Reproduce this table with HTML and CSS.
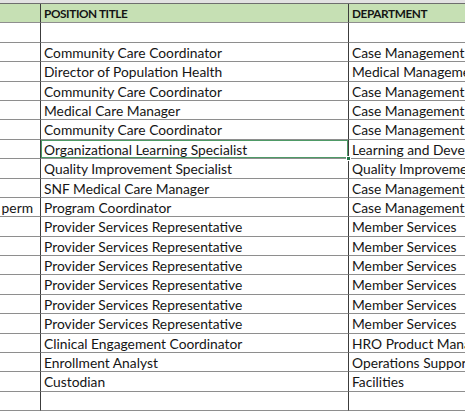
FILE: index.html
```html
<!DOCTYPE html>
<html>
<head>
<meta charset="utf-8">
<link rel="stylesheet" href="styles.css">
</head>
<body>
<div class="topstrip"></div>
<div class="sheet">
  <div class="cell a hdr"></div><div class="cell b hdr">POSITION TITLE</div><div class="cell c hdr">DEPARTMENT</div>
  <div class="cell a"></div><div class="cell b"></div><div class="cell c"></div>
  <div class="cell a"></div><div class="cell b">Community Care Coordinator</div><div class="cell c">Case Management</div>
  <div class="cell a"></div><div class="cell b">Director of Population Health</div><div class="cell c">Medical Management</div>
  <div class="cell a"></div><div class="cell b">Community Care Coordinator</div><div class="cell c">Case Management</div>
  <div class="cell a"></div><div class="cell b">Medical Care Manager</div><div class="cell c">Case Management</div>
  <div class="cell a"></div><div class="cell b">Community Care Coordinator</div><div class="cell c">Case Management</div>
  <div class="cell a"></div><div class="cell b selected">Organizational Learning Specialist</div><div class="cell c">Learning and Development</div>
  <div class="cell a"></div><div class="cell b">Quality Improvement Specialist</div><div class="cell c">Quality Improvement</div>
  <div class="cell a"></div><div class="cell b">SNF Medical Care Manager</div><div class="cell c">Case Management</div>
  <div class="cell a right">perm</div><div class="cell b">Program Coordinator</div><div class="cell c">Case Management</div>
  <div class="cell a"></div><div class="cell b">Provider Services Representative</div><div class="cell c">Member Services</div>
  <div class="cell a"></div><div class="cell b">Provider Services Representative</div><div class="cell c">Member Services</div>
  <div class="cell a"></div><div class="cell b">Provider Services Representative</div><div class="cell c">Member Services</div>
  <div class="cell a"></div><div class="cell b">Provider Services Representative</div><div class="cell c">Member Services</div>
  <div class="cell a"></div><div class="cell b">Provider Services Representative</div><div class="cell c">Member Services</div>
  <div class="cell a"></div><div class="cell b">Provider Services Representative</div><div class="cell c">Member Services</div>
  <div class="cell a"></div><div class="cell b">Clinical Engagement Coordinator</div><div class="cell c">HRO Product Management</div>
  <div class="cell a"></div><div class="cell b">Enrollment Analyst</div><div class="cell c">Operations Support</div>
  <div class="cell a"></div><div class="cell b">Custodian</div><div class="cell c">Facilities</div>
  <div class="cell a"></div><div class="cell b"></div><div class="cell c"></div>
</div>
</body>
</html>
```
FILE: styles.css
```css
html, body {
  margin: 0;
  padding: 0;
  overflow: hidden;
  background: #ffffff;
  width: 465px;
  height: 414px;
}
.topstrip {
  height: 3px;
  background: #e2e2e2;
}
.sheet {
  display: grid;
  grid-template-columns: 41px 308px 220px;
  grid-auto-rows: 19.4px;
  border-top: 1px solid #6e6e6e;
  width: 569px;
  font-family: "Lato", "Liberation Sans", sans-serif;
  font-size: 13.8px;
  color: #151515;
}
.cell {
  box-sizing: border-box;
  border-bottom: 1px solid #8e8e8e;
  white-space: nowrap;
  overflow: hidden;
  line-height: 20px;
  padding-left: 3px;
  position: relative;
}
.a {
  border-right: 1px solid #3c3c3c;
}
.b {
  border-right: 1px solid #3c3c3c;
}
.hdr {
  background: #c6e0b4;
  font-weight: bold;
  font-size: 11.8px;
  letter-spacing: -0.4px;
}
.right {
  text-align: right;
  padding-right: 7px;
  padding-left: 0;
}
.selected {
  overflow: visible;
  box-shadow: inset 0 0 0 1px #4e9a66;
}
.selected::after {
  content: "";
  position: absolute;
  right: -3px;
  bottom: -3px;
  width: 5px;
  height: 5px;
  background: #217346;
  border: 1px solid #fff;
  box-sizing: border-box;
  z-index: 2;
}
```
